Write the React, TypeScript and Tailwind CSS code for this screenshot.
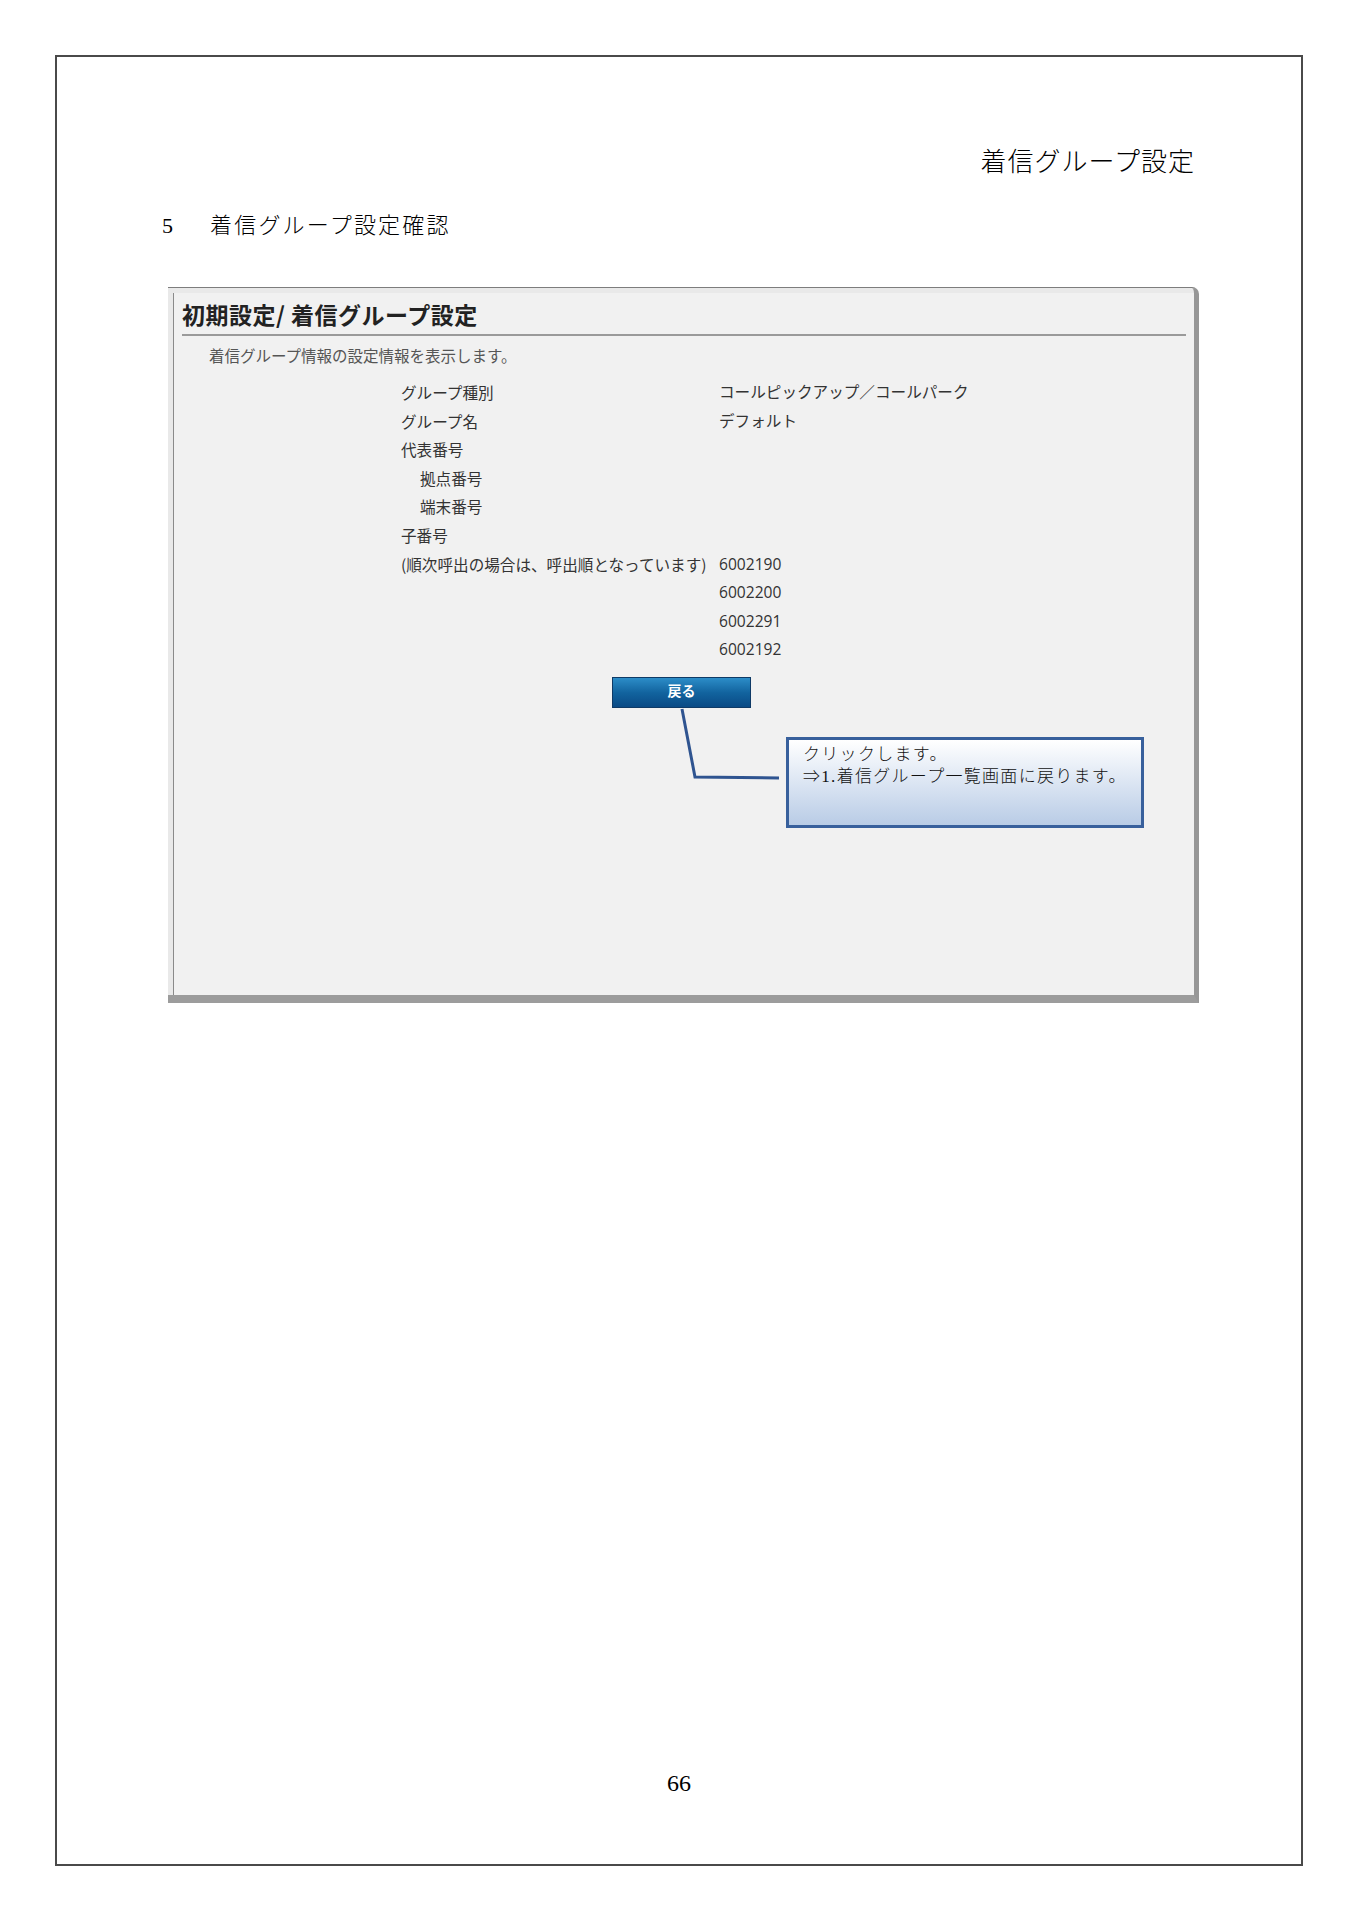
import React from 'react';

// ─── Data ─────────────────────────────────────────────────────────────────────

type Row = { label: string; value?: string; indent?: boolean };

const rows: Row[] = [
  { label: 'グループ種別', value: 'コールピックアップ／コールパーク' },
  { label: 'グループ名', value: 'デフォルト' },
  { label: '代表番号' },
  { label: '拠点番号', indent: true },
  { label: '端末番号', indent: true },
  { label: '子番号' },
  { label: '(順次呼出の場合は、呼出順となっています)', value: '6002190' },
  { label: '', value: '6002200' },
  { label: '', value: '6002291' },
  { label: '', value: '6002192' },
];

const docFont = { fontFamily: '"Liberation Serif", "Noto Sans CJK JP", serif' };
const uiFont = { fontFamily: '"Noto Sans CJK JP", "Noto Sans", sans-serif' };
const valueFont = { fontFamily: '"Open Sans", "Noto Sans CJK JP", sans-serif' };

// ─── Callout ──────────────────────────────────────────────────────────────────

function Callout() {
  return (
    <>
      <svg className="absolute left-0 top-0 pointer-events-none" width="1031" height="716">
        <polyline points="514,421 527,489 611,490" fill="none" stroke="#2f5490" strokeWidth="3" />
      </svg>
      <div
        className="absolute left-[618px] top-[449px] w-[358px] h-[91px] border-[3px] border-[#38609c] bg-gradient-to-b from-white to-[#b9cce6] pl-[14px] pt-[4px] text-[17px] leading-[22px] tracking-[1.3px] text-[#111] font-light"
        style={docFont}
      >
        <p>クリックします。</p>
        <p>⇒1.着信グループ一覧画面に戻ります。</p>
      </div>
    </>
  );
}

// ─── Screen capture panel ─────────────────────────────────────────────────────

function SettingsPanel() {
  return (
    <div className="relative flex w-[1031px] h-[716px] ml-[111px] rounded-tr-[7px] border-t border-t-[#7d7d7d] border-r-[5px] border-r-[#979797] border-b-[8px] border-b-[#9c9c9c] bg-[#e9e9e9] pl-[5px] pt-[5px]">
      <div className="flex-1 border-l border-l-[#8a8a8a] bg-[#f1f1f1]" style={uiFont}>
        <h2 className="pl-[8px] pt-[6px] text-[23px] leading-[30px] font-bold text-[#222] tracking-[0.5px]">初期設定/ 着信グループ設定</h2>
        <div className="ml-[8px] mr-[8px] mt-[5px] h-[2px] bg-[#9a9a9a]" />
        <p className="pl-[35px] mt-[9px] text-[15.5px] leading-[20px] text-[#555]">着信グループ情報の設定情報を表示します。</p>
        <div className="ml-[227px] mt-[13px] grid grid-cols-[318px_auto] text-[15.6px] leading-[28.6px] text-[#333]">
          {rows.map((r, i) => (
            <React.Fragment key={i}>
              <span className={r.indent ? 'pl-[19px]' : ''}>{r.label}</span>
              <span style={valueFont}>{r.value ?? ''}</span>
            </React.Fragment>
          ))}
        </div>
        <button className="ml-[438px] mt-[13px] w-[139px] h-[31px] border border-[#0f3a66] bg-gradient-to-b from-[#2c8dc8] via-[#12649f] to-[#0a4a85] text-white text-[14px] font-bold leading-none pb-[4px]">
          戻る
        </button>
      </div>
      <Callout />
    </div>
  );
}

// ─── Page ─────────────────────────────────────────────────────────────────────

export default function App() {
  return (
    <div className="w-[1358px] h-[1920px] bg-white pt-[55px] pl-[55px]">
      <div className="flex flex-col w-[1248px] h-[1811px] border-2 border-[#4a4a4a]">
        <div className="mt-[91px] pr-[106px] text-right text-[26px] leading-[30px] tracking-[1px] text-black font-light" style={docFont}>
          着信グループ設定
        </div>
        <div className="mt-[35px] pl-[105px] flex text-[22px] leading-[26px] text-black font-light" style={docFont}>
          <span className="w-[48px]">5</span>
          <span className="tracking-[2.2px]">着信グループ設定確認</span>
        </div>
        <div className="mt-[48px]">
          <SettingsPanel />
        </div>
        <div className="mt-[766px] text-center text-[24px] leading-[28px] text-black" style={docFont}>66</div>
      </div>
    </div>
  );
}
